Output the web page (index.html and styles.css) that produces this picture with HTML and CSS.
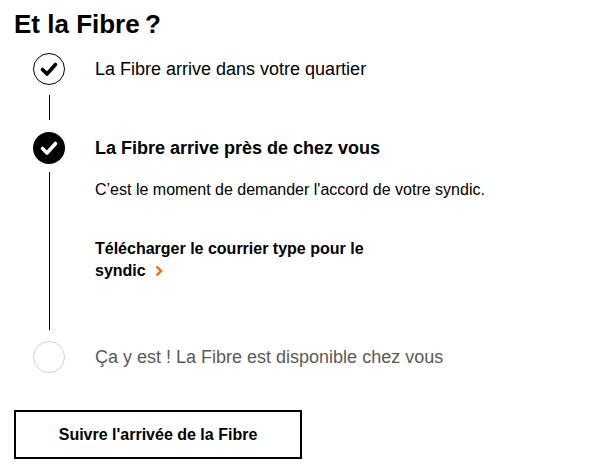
FILE: index.html
```html
<!DOCTYPE html>
<html lang="fr">
<head>
<meta charset="utf-8">
<link rel="stylesheet" href="styles.css">
</head>
<body>
<main class="page">
  <h2 class="title">Et la Fibre&#8239;?</h2>
  <ol class="steps">
    <li class="step">
      <div class="rail">
        <span class="dot dot-done">
          <svg viewBox="0 0 32 32" width="32" height="32"><polyline points="9.5,16.5 14,21 22.5,11.5" fill="none" stroke="#000" stroke-width="3.6" stroke-linecap="round" stroke-linejoin="round"/></svg>
        </span>
        <span class="line line-short"></span>
      </div>
      <div class="content content-1">
        <p class="label">La Fibre arrive dans votre quartier</p>
      </div>
    </li>
    <li class="step">
      <div class="rail">
        <span class="dot dot-current">
          <svg viewBox="0 0 32 32" width="32" height="32"><polyline points="9.5,16.5 14,21 22.5,11.5" fill="none" stroke="#fff" stroke-width="3.6" stroke-linecap="round" stroke-linejoin="round"/></svg>
        </span>
        <span class="line line-long"></span>
      </div>
      <div class="content content-2">
        <p class="label label-bold">La Fibre arrive près de chez vous</p>
        <p class="desc">C’est le moment de demander l'accord de votre syndic.</p>
        <a class="link" href="#">Télécharger le courrier type pour le <span class="nowrap">syndic<svg class="chev" viewBox="0 0 8 12" width="8" height="12"><polyline points="1.5,1.5 6,6 1.5,10.5" fill="none" stroke="#f16e00" stroke-width="2.4"/></svg></span></a>
      </div>
    </li>
    <li class="step">
      <div class="rail">
        <span class="dot dot-todo"></span>
      </div>
      <div class="content">
        <p class="label label-muted">Ça y est ! La Fibre est disponible chez vous</p>
      </div>
    </li>
  </ol>
  <button class="btn" type="button">Suivre l'arrivée de la Fibre</button>
</main>
</body>
</html>
```

FILE: styles.css
```css
* { box-sizing: border-box; }
html, body { margin: 0; padding: 0; background: #fff; }
body {
  font-family: "Liberation Sans", Arial, Helvetica, sans-serif;
  color: #000;
}
.page {
  padding: 9px 14px 0 14px;
}
.title {
  margin: 0;
  font-size: 26px;
  line-height: 30px;
  font-weight: 700;
}
.steps {
  list-style: none;
  margin: 14px 0 0 0;
  padding: 0 0 0 19px;
}
.step {
  display: flex;
  gap: 30px;
}
.rail {
  width: 32px;
  flex: 0 0 32px;
  display: flex;
  flex-direction: column;
  align-items: center;
}
.dot {
  width: 32px;
  height: 32px;
  border-radius: 50%;
  flex: 0 0 32px;
  display: block;
}
.dot svg { display: block; }
.dot-done {
  border: 1px solid #000;
  background: #fff;
}
.dot-done svg { margin: -1px; }
.dot-current {
  background: #000;
}
.dot-todo {
  border: 1px solid #d0d0d0;
  background: #fff;
}
.line {
  width: 1px;
  background: #000;
  flex: 1 1 auto;
}
.line-short { margin: 10px 0 12px; }
.line-long { margin: 8px 0 11px; }
.content { flex: 1 1 auto; }
.content-1 { padding-bottom: 47px; }
.content-2 { padding-bottom: 59px; }
.label {
  margin: 0;
  font-size: 18px;
  line-height: 32px;
}
.label-bold { font-weight: 700; }
.label-muted { color: #595959; }
.desc {
  margin: 14px 0 0 0;
  font-size: 16px;
  line-height: 24px;
}
.link {
  display: block;
  margin-top: 36px;
  max-width: 300px;
  font-size: 16px;
  line-height: 22px;
  font-weight: 700;
  color: #000;
  text-decoration: none;
}
.nowrap { white-space: nowrap; }
.chev {
  margin-left: 9px;
  vertical-align: -1px;
}
.btn {
  display: block;
  margin-top: 37px;
  width: 288px;
  height: 49px;
  border: 2px solid #000;
  background: #fff;
  font-family: inherit;
  font-size: 16px;
  font-weight: 700;
  color: #000;
  cursor: pointer;
}
```
